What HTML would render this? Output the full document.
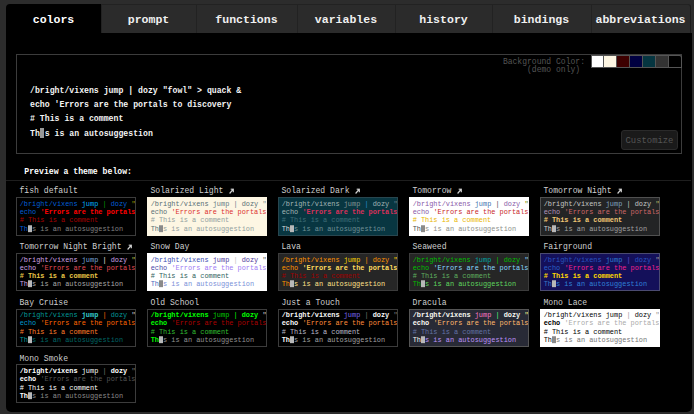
<!DOCTYPE html>
<html><head><meta charset="utf-8">
<style>
html,body{margin:0;padding:0;}
body{width:694px;height:414px;overflow:hidden;background:#2c2c2c;position:relative;font-family:"Liberation Mono",monospace;}
body div{position:absolute;white-space:pre;}
.tab{top:4px;height:28px;background:#2b2b2b;border-top:1px solid #222;border-left:1px solid #222;box-sizing:content-box;}
.tt{color:#f0f0f0;font-weight:bold;}
#panel{left:6px;top:33px;width:685.6px;height:379px;background:#000;border-radius:0 0 5px 5px;}
#bigbox{left:16px;top:54px;width:664px;height:98px;border:1px solid #3c3c3c;}
.sw{top:54px;height:13px;}
.mp{color:#f4f4f4;font-weight:bold;}
.cur{display:inline-block;background:#999;}
.box{overflow:hidden;}
.box div{position:static;}
.ttl{color:#cfcfcf;}
.arr{position:absolute;}
</style></head><body>

<div class="tab" style="left:101px;width:94px;"></div>
<div class="tab" style="left:196px;width:100px;"></div>
<div class="tab" style="left:297px;width:97px;"></div>
<div class="tab" style="left:395px;width:96px;"></div>
<div class="tab" style="left:492px;width:98px;"></div>
<div class="tab" style="left:591px;width:98px;border-right:1px solid #1c1c1c;border-radius:0 3px 0 0;"></div>
<div id="panel"></div>
<div style="left:6px;top:4px;width:95px;height:30px;background:#000;border-radius:4px 0 0 0;"></div>
<div class="tt" style="left:32.71px;top:13.23px;font-size:11.55px;line-height:14px;color:#fff;">colors</div>
<div class="tt" style="left:127.71px;top:13.23px;font-size:11.55px;line-height:14px;">prompt</div>
<div class="tt" style="left:215.31px;top:13.23px;font-size:11.55px;line-height:14px;">functions</div>
<div class="tt" style="left:314.81px;top:13.23px;font-size:11.55px;line-height:14px;">variables</div>
<div class="tt" style="left:419.25px;top:13.23px;font-size:11.55px;line-height:14px;">history</div>
<div class="tt" style="left:513.78px;top:13.23px;font-size:11.55px;line-height:14px;">bindings</div>
<div class="tt" style="left:595.46px;top:13.23px;font-size:11.55px;line-height:14px;">abbreviations</div>
<div id="bigbox"></div>
<div style="left:502.89px;top:56.56px;font-size:8.05px;line-height:9px;transform:scaleY(1.12);transform-origin:0 6.64px;color:#555;">Background Color:</div>
<div style="left:527.04px;top:64.96px;font-size:8.05px;line-height:9px;transform:scaleY(1.12);transform-origin:0 6.64px;color:#555;">(demo only)</div>
<div style="left:590.5px;top:54.5px;width:91px;height:13.5px;background:#555;border-radius:0 2px 0 0;"></div>
<div style="left:591.50px;top:55.5px;width:11.90px;height:11.5px;background:#fff;"></div>
<div style="left:604.40px;top:55.5px;width:11.90px;height:11.5px;background:#fdf6e3;"></div>
<div style="left:617.30px;top:55.5px;width:11.90px;height:11.5px;background:#3d0000;"></div>
<div style="left:630.20px;top:55.5px;width:11.90px;height:11.5px;background:#000040;"></div>
<div style="left:643.10px;top:55.5px;width:11.90px;height:11.5px;background:#053540;"></div>
<div style="left:656.00px;top:55.5px;width:11.90px;height:11.5px;background:#333;"></div>
<div style="left:668.90px;top:55.5px;width:11.90px;height:11.5px;background:#000;border-radius:0 1.5px 0 0;"></div>
<div class="mp" style="left:30.00px;top:80.62px;font-size:8.2px;line-height:20px;">/bright/vixens jump | dozy "fowl" &gt; quack &amp;</div>
<div class="mp" style="left:30.00px;top:94.95px;font-size:8.2px;line-height:20px;">echo 'Errors are the portals to discovery</div>
<div class="mp" style="left:30.00px;top:109.28px;font-size:8.2px;line-height:20px;"># This is a comment</div>
<div class="mp" style="left:30.00px;top:123.61px;font-size:8.2px;line-height:20px;">Th<span class="cur" style="width:4.3px;height:9.8px;vertical-align:-1.9px;margin-right:0.62px;"></span>s is an autosuggestion</div>
<div style="left:621px;top:130px;width:57px;height:20px;box-sizing:border-box;border:1px solid #2a2a2a;background:#1a1a1a;border-radius:3px;"></div>
<div style="left:625.50px;top:135.63px;font-size:8.9px;line-height:10px;color:#555;">Customize</div>
<div style="left:24.30px;top:167.13px;font-size:8.17px;line-height:10px;color:#fff;font-weight:bold;">Preview a theme below:</div>
<div style="left:6px;top:179.5px;width:685px;height:1px;background:#1e1e1e;"></div>
<div class="ttl" style="left:19.50px;top:186.34px;font-size:8.1px;line-height:9px;transform:scaleY(1.2);transform-origin:0 6.66px;">fish default</div>
<div class="box" style="left:16.00px;top:197.10px;width:120px;height:38.5px;background:#000;border:1px solid #3c3c3c;box-sizing:border-box;">
<div style="position:absolute;left:2.7px;top:1.74px;font-size:6.9px;line-height:8.25px;transform:scaleY(1.15);transform-origin:0 5.96px;"><span style="color:#005fd7">/bright/vixens</span> <span style="color:#00afff">jump</span> <span style="color:#009900">|</span> <span style="color:#005fd7">dozy</span> <span style="color:#999900">&quot;fowl&quot;</span></div>
<div style="position:absolute;left:2.7px;top:9.99px;font-size:6.9px;line-height:8.25px;transform:scaleY(1.15);transform-origin:0 5.96px;"><span style="color:#005fd7">echo</span> <span style="color:#ff0000;font-weight:bold">'Errors are the portals to discovery</span></div>
<div style="position:absolute;left:2.7px;top:18.24px;font-size:6.9px;line-height:8.25px;transform:scaleY(1.15);transform-origin:0 5.96px;"><span style="color:#a80000"># This is a comment</span></div>
<div style="position:absolute;left:2.7px;top:26.49px;font-size:6.9px;line-height:8.25px;transform:scaleY(1.15);transform-origin:0 5.96px;"><span style="color:#005fd7">Th</span><span class="cur" style="width:4.14px;height:5.6px;vertical-align:-0.6px;background:#b8b8b8"></span><span style="color:#808080">s is an autosuggestion</span></div>
</div>
<div class="ttl" style="left:150.50px;top:186.34px;font-size:8.1px;line-height:9px;transform:scaleY(1.2);transform-origin:0 6.66px;">Solarized Light<svg width="5" height="5" viewBox="0 0 5 5" style="vertical-align:-0.5px;margin-left:5.6px"><path d="M0.6 4.4 L4.2 0.8 M1.7 0.7 H4.3 V3.3" stroke="#d0d0d0" stroke-width="1.2" fill="none"/></svg></div>
<div class="box" style="left:147.00px;top:197.10px;width:120px;height:38.5px;background:#fdf6e3;border:1px solid #fdf6e3;box-sizing:border-box;">
<div style="position:absolute;left:2.7px;top:1.74px;font-size:6.9px;line-height:8.25px;transform:scaleY(1.15);transform-origin:0 5.96px;"><span style="color:#586e75">/bright/vixens</span> <span style="color:#657b83">jump</span> <span style="color:#657b83">|</span> <span style="color:#586e75">dozy</span> <span style="color:#839496">&quot;fowl&quot;</span></div>
<div style="position:absolute;left:2.7px;top:9.99px;font-size:6.9px;line-height:8.25px;transform:scaleY(1.15);transform-origin:0 5.96px;"><span style="color:#586e75">echo</span> <span style="color:#dc322f">'Errors are the portals to discovery</span></div>
<div style="position:absolute;left:2.7px;top:18.24px;font-size:6.9px;line-height:8.25px;transform:scaleY(1.15);transform-origin:0 5.96px;"><span style="color:#93a1a1"># This is a comment</span></div>
<div style="position:absolute;left:2.7px;top:26.49px;font-size:6.9px;line-height:8.25px;transform:scaleY(1.15);transform-origin:0 5.96px;"><span style="color:#586e75">Th</span><span class="cur" style="width:4.14px;height:5.6px;vertical-align:-0.6px;background:#8a8a8a"></span><span style="color:#93a1a1">s is an autosuggestion</span></div>
</div>
<div class="ttl" style="left:281.50px;top:186.34px;font-size:8.1px;line-height:9px;transform:scaleY(1.2);transform-origin:0 6.66px;">Solarized Dark<svg width="5" height="5" viewBox="0 0 5 5" style="vertical-align:-0.5px;margin-left:5.6px"><path d="M0.6 4.4 L4.2 0.8 M1.7 0.7 H4.3 V3.3" stroke="#d0d0d0" stroke-width="1.2" fill="none"/></svg></div>
<div class="box" style="left:278.00px;top:197.10px;width:120px;height:38.5px;background:#083641;border:1px solid #28464f;box-sizing:border-box;">
<div style="position:absolute;left:2.7px;top:1.74px;font-size:6.9px;line-height:8.25px;transform:scaleY(1.15);transform-origin:0 5.96px;"><span style="color:#a3b5b5">/bright/vixens</span> <span style="color:#839496">jump</span> <span style="color:#268bd2">|</span> <span style="color:#a3b5b5">dozy</span> <span style="color:#657b83">&quot;fowl&quot;</span></div>
<div style="position:absolute;left:2.7px;top:9.99px;font-size:6.9px;line-height:8.25px;transform:scaleY(1.15);transform-origin:0 5.96px;"><span style="color:#a3b5b5">echo</span> <span style="color:#d8305a;font-weight:bold">'Errors are the portals to discovery</span></div>
<div style="position:absolute;left:2.7px;top:18.24px;font-size:6.9px;line-height:8.25px;transform:scaleY(1.15);transform-origin:0 5.96px;"><span style="color:#3d6c76"># This is a comment</span></div>
<div style="position:absolute;left:2.7px;top:26.49px;font-size:6.9px;line-height:8.25px;transform:scaleY(1.15);transform-origin:0 5.96px;"><span style="color:#dddddd">Th</span><span class="cur" style="width:4.14px;height:5.6px;vertical-align:-0.6px;background:#b8b8b8"></span><span style="color:#6f9096">s is an autosuggestion</span></div>
</div>
<div class="ttl" style="left:412.50px;top:186.34px;font-size:8.1px;line-height:9px;transform:scaleY(1.2);transform-origin:0 6.66px;">Tomorrow<svg width="5" height="5" viewBox="0 0 5 5" style="vertical-align:-0.5px;margin-left:5.6px"><path d="M0.6 4.4 L4.2 0.8 M1.7 0.7 H4.3 V3.3" stroke="#d0d0d0" stroke-width="1.2" fill="none"/></svg></div>
<div class="box" style="left:409.00px;top:197.10px;width:120px;height:38.5px;background:#ffffff;border:1px solid #ffffff;box-sizing:border-box;">
<div style="position:absolute;left:2.7px;top:1.74px;font-size:6.9px;line-height:8.25px;transform:scaleY(1.15);transform-origin:0 5.96px;"><span style="color:#8959a8">/bright/vixens</span> <span style="color:#4271ae">jump</span> <span style="color:#4d4d4c">|</span> <span style="color:#8959a8">dozy</span> <span style="color:#718c00">&quot;fowl&quot;</span></div>
<div style="position:absolute;left:2.7px;top:9.99px;font-size:6.9px;line-height:8.25px;transform:scaleY(1.15);transform-origin:0 5.96px;"><span style="color:#8959a8">echo</span> <span style="color:#c82829">'Errors are the portals to discovery</span></div>
<div style="position:absolute;left:2.7px;top:18.24px;font-size:6.9px;line-height:8.25px;transform:scaleY(1.15);transform-origin:0 5.96px;"><span style="color:#eab700"># This is a comment</span></div>
<div style="position:absolute;left:2.7px;top:26.49px;font-size:6.9px;line-height:8.25px;transform:scaleY(1.15);transform-origin:0 5.96px;"><span style="color:#4d4d4c">Th</span><span class="cur" style="width:4.14px;height:5.6px;vertical-align:-0.6px;background:#8a8a8a"></span><span style="color:#8e908c">s is an autosuggestion</span></div>
</div>
<div class="ttl" style="left:543.50px;top:186.34px;font-size:8.1px;line-height:9px;transform:scaleY(1.2);transform-origin:0 6.66px;">Tomorrow Night<svg width="5" height="5" viewBox="0 0 5 5" style="vertical-align:-0.5px;margin-left:5.6px"><path d="M0.6 4.4 L4.2 0.8 M1.7 0.7 H4.3 V3.3" stroke="#d0d0d0" stroke-width="1.2" fill="none"/></svg></div>
<div class="box" style="left:540.00px;top:197.10px;width:120px;height:38.5px;background:#232425;border:1px solid #505050;box-sizing:border-box;">
<div style="position:absolute;left:2.7px;top:1.74px;font-size:6.9px;line-height:8.25px;transform:scaleY(1.15);transform-origin:0 5.96px;"><span style="color:#c5c8c6">/bright/vixens</span> <span style="color:#81a2be">jump</span> <span style="color:#c5c8c6">|</span> <span style="color:#c5c8c6">dozy</span> <span style="color:#b5bd68">&quot;fowl&quot;</span></div>
<div style="position:absolute;left:2.7px;top:9.99px;font-size:6.9px;line-height:8.25px;transform:scaleY(1.15);transform-origin:0 5.96px;"><span style="color:#b294bb">echo</span> <span style="color:#cc6666">'Errors are the portals to discovery</span></div>
<div style="position:absolute;left:2.7px;top:18.24px;font-size:6.9px;line-height:8.25px;transform:scaleY(1.15);transform-origin:0 5.96px;"><span style="color:#f0c674;font-weight:bold"># This is a comment</span></div>
<div style="position:absolute;left:2.7px;top:26.49px;font-size:6.9px;line-height:8.25px;transform:scaleY(1.15);transform-origin:0 5.96px;"><span style="color:#d0d0d0">Th</span><span class="cur" style="width:4.14px;height:5.6px;vertical-align:-0.6px;background:#b8b8b8"></span><span style="color:#a0a0a0">s is an autosuggestion</span></div>
</div>
<div class="ttl" style="left:19.50px;top:242.04px;font-size:8.1px;line-height:9px;transform:scaleY(1.2);transform-origin:0 6.66px;">Tomorrow Night Bright<svg width="5" height="5" viewBox="0 0 5 5" style="vertical-align:-0.5px;margin-left:5.6px"><path d="M0.6 4.4 L4.2 0.8 M1.7 0.7 H4.3 V3.3" stroke="#d0d0d0" stroke-width="1.2" fill="none"/></svg></div>
<div class="box" style="left:16.00px;top:252.80px;width:120px;height:38.5px;background:#000;border:1px solid #3c3c3c;box-sizing:border-box;">
<div style="position:absolute;left:2.7px;top:1.74px;font-size:6.9px;line-height:8.25px;transform:scaleY(1.15);transform-origin:0 5.96px;"><span style="color:#d0a4e6">/bright/vixens</span> <span style="color:#7aa6da">jump</span> <span style="color:#eaeaea">|</span> <span style="color:#d0a4e6">dozy</span> <span style="color:#b9ca4a">&quot;fowl&quot;</span></div>
<div style="position:absolute;left:2.7px;top:9.99px;font-size:6.9px;line-height:8.25px;transform:scaleY(1.15);transform-origin:0 5.96px;"><span style="color:#d0a4e6">echo</span> <span style="color:#e04a55">'Errors are the portals to discovery</span></div>
<div style="position:absolute;left:2.7px;top:18.24px;font-size:6.9px;line-height:8.25px;transform:scaleY(1.15);transform-origin:0 5.96px;"><span style="color:#e7c547;font-weight:bold"># This is a comment</span></div>
<div style="position:absolute;left:2.7px;top:26.49px;font-size:6.9px;line-height:8.25px;transform:scaleY(1.15);transform-origin:0 5.96px;"><span style="color:#d0a4e6">Th</span><span class="cur" style="width:4.14px;height:5.6px;vertical-align:-0.6px;background:#b8b8b8"></span><span style="color:#a8a8a8">s is an autosuggestion</span></div>
</div>
<div class="ttl" style="left:150.50px;top:242.04px;font-size:8.1px;line-height:9px;transform:scaleY(1.2);transform-origin:0 6.66px;">Snow Day</div>
<div class="box" style="left:147.00px;top:252.80px;width:120px;height:38.5px;background:#ffffff;border:1px solid #ffffff;box-sizing:border-box;">
<div style="position:absolute;left:2.7px;top:1.74px;font-size:6.9px;line-height:8.25px;transform:scaleY(1.15);transform-origin:0 5.96px;"><span style="color:#3a4cb0">/bright/vixens</span> <span style="color:#4c3499">jump</span> <span style="color:#c0c0c0">|</span> <span style="color:#4c3499">dozy</span> <span style="color:#5a5a5a">&quot;fowl&quot;</span></div>
<div style="position:absolute;left:2.7px;top:9.99px;font-size:6.9px;line-height:8.25px;transform:scaleY(1.15);transform-origin:0 5.96px;"><span style="color:#4a4aa8">echo</span> <span style="color:#9f7df5">'Errors are the portals to discovery</span></div>
<div style="position:absolute;left:2.7px;top:18.24px;font-size:6.9px;line-height:8.25px;transform:scaleY(1.15);transform-origin:0 5.96px;"><span style="color:#305f5d"># This is a comment</span></div>
<div style="position:absolute;left:2.7px;top:26.49px;font-size:6.9px;line-height:8.25px;transform:scaleY(1.15);transform-origin:0 5.96px;"><span style="color:#4a68c0">Th</span><span class="cur" style="width:4.14px;height:5.6px;vertical-align:-0.6px;background:#8a8a8a"></span><span style="color:#7a90d8">s is an autosuggestion</span></div>
</div>
<div class="ttl" style="left:281.50px;top:242.04px;font-size:8.1px;line-height:9px;transform:scaleY(1.2);transform-origin:0 6.66px;">Lava</div>
<div class="box" style="left:278.00px;top:252.80px;width:120px;height:38.5px;background:#262626;border:1px solid #3c3c3c;box-sizing:border-box;">
<div style="position:absolute;left:2.7px;top:1.74px;font-size:6.9px;line-height:8.25px;transform:scaleY(1.15);transform-origin:0 5.96px;"><span style="color:#ff9400">/bright/vixens</span> <span style="color:#ffd700">jump</span> <span style="color:#ff9400">|</span> <span style="color:#ff9400">dozy</span> <span style="color:#ffd700">&quot;fowl&quot;</span></div>
<div style="position:absolute;left:2.7px;top:9.99px;font-size:6.9px;line-height:8.25px;transform:scaleY(1.15);transform-origin:0 5.96px;"><span style="color:#ff9400">echo</span> <span style="color:#ffdc5f;font-weight:bold">'Errors are the portals to discovery</span></div>
<div style="position:absolute;left:2.7px;top:18.24px;font-size:6.9px;line-height:8.25px;transform:scaleY(1.15);transform-origin:0 5.96px;"><span style="color:#9f0000"># This is a comment</span></div>
<div style="position:absolute;left:2.7px;top:26.49px;font-size:6.9px;line-height:8.25px;transform:scaleY(1.15);transform-origin:0 5.96px;"><span style="color:#ff9400">Th</span><span class="cur" style="width:4.14px;height:5.6px;vertical-align:-0.6px;background:#b8b8b8"></span><span style="color:#ffe08a">s is an autosuggestion</span></div>
</div>
<div class="ttl" style="left:412.50px;top:242.04px;font-size:8.1px;line-height:9px;transform:scaleY(1.2);transform-origin:0 6.66px;">Seaweed</div>
<div class="box" style="left:409.00px;top:252.80px;width:120px;height:38.5px;background:#262626;border:1px solid #3c3c3c;box-sizing:border-box;">
<div style="position:absolute;left:2.7px;top:1.74px;font-size:6.9px;line-height:8.25px;transform:scaleY(1.15);transform-origin:0 5.96px;"><span style="color:#00bf00">/bright/vixens</span> <span style="color:#00a5a5">jump</span> <span style="color:#00bf00">|</span> <span style="color:#00bf00">dozy</span> <span style="color:#87d7ff">&quot;fowl&quot;</span></div>
<div style="position:absolute;left:2.7px;top:9.99px;font-size:6.9px;line-height:8.25px;transform:scaleY(1.15);transform-origin:0 5.96px;"><span style="color:#00bf00">echo</span> <span style="color:#87d7ff">'Errors are the portals to discovery</span></div>
<div style="position:absolute;left:2.7px;top:18.24px;font-size:6.9px;line-height:8.25px;transform:scaleY(1.15);transform-origin:0 5.96px;"><span style="color:#5faf5f"># This is a comment</span></div>
<div style="position:absolute;left:2.7px;top:26.49px;font-size:6.9px;line-height:8.25px;transform:scaleY(1.15);transform-origin:0 5.96px;"><span style="color:#00bf00">Th</span><span class="cur" style="width:4.14px;height:5.6px;vertical-align:-0.6px;background:#b8b8b8"></span><span style="color:#5fd75f">s is an autosuggestion</span></div>
</div>
<div class="ttl" style="left:543.50px;top:242.04px;font-size:8.1px;line-height:9px;transform:scaleY(1.2);transform-origin:0 6.66px;">Fairground</div>
<div class="box" style="left:540.00px;top:252.80px;width:120px;height:38.5px;background:#14105a;border:1px solid #4a4a70;box-sizing:border-box;">
<div style="position:absolute;left:2.7px;top:1.74px;font-size:6.9px;line-height:8.25px;transform:scaleY(1.15);transform-origin:0 5.96px;"><span style="color:#2a55c0">/bright/vixens</span> <span style="color:#2f7fd0">jump</span> <span style="color:#6a4fd0">|</span> <span style="color:#2a55c0">dozy</span> <span style="color:#a0a0a0">&quot;fowl&quot;</span></div>
<div style="position:absolute;left:2.7px;top:9.99px;font-size:6.9px;line-height:8.25px;transform:scaleY(1.15);transform-origin:0 5.96px;"><span style="color:#2a60c8">echo</span> <span style="color:#f0208f">'Errors are the portals to discovery</span></div>
<div style="position:absolute;left:2.7px;top:18.24px;font-size:6.9px;line-height:8.25px;transform:scaleY(1.15);transform-origin:0 5.96px;"><span style="color:#ffd700;font-weight:bold"># This is a comment</span></div>
<div style="position:absolute;left:2.7px;top:26.49px;font-size:6.9px;line-height:8.25px;transform:scaleY(1.15);transform-origin:0 5.96px;"><span style="color:#3a7ac8">Th</span><span class="cur" style="width:4.14px;height:5.6px;vertical-align:-0.6px;background:#b8b8b8"></span><span style="color:#2f80d8">s is an autosuggestion</span></div>
</div>
<div class="ttl" style="left:19.50px;top:297.74px;font-size:8.1px;line-height:9px;transform:scaleY(1.2);transform-origin:0 6.66px;">Bay Cruise</div>
<div class="box" style="left:16.00px;top:308.50px;width:120px;height:38.5px;background:#000;border:1px solid #3c3c3c;box-sizing:border-box;">
<div style="position:absolute;left:2.7px;top:1.74px;font-size:6.9px;line-height:8.25px;transform:scaleY(1.15);transform-origin:0 5.96px;"><span style="color:#009999">/bright/vixens</span> <span style="color:#33cccc;font-weight:bold">jump</span> <span style="color:#ff6600">|</span> <span style="color:#009999">dozy</span> <span style="color:#ccc">&quot;fowl&quot;</span></div>
<div style="position:absolute;left:2.7px;top:9.99px;font-size:6.9px;line-height:8.25px;transform:scaleY(1.15);transform-origin:0 5.96px;"><span style="color:#0099cc">echo</span> <span style="color:#ff6600">'Errors are the portals to discovery</span></div>
<div style="position:absolute;left:2.7px;top:18.24px;font-size:6.9px;line-height:8.25px;transform:scaleY(1.15);transform-origin:0 5.96px;"><span style="color:#ff7f2a"># This is a comment</span></div>
<div style="position:absolute;left:2.7px;top:26.49px;font-size:6.9px;line-height:8.25px;transform:scaleY(1.15);transform-origin:0 5.96px;"><span style="color:#009999">Th</span><span class="cur" style="width:4.14px;height:5.6px;vertical-align:-0.6px;background:#b8b8b8"></span><span style="color:#006666">s is an autosuggestion</span></div>
</div>
<div class="ttl" style="left:150.50px;top:297.74px;font-size:8.1px;line-height:9px;transform:scaleY(1.2);transform-origin:0 6.66px;">Old School</div>
<div class="box" style="left:147.00px;top:308.50px;width:120px;height:38.5px;background:#000;border:1px solid #3c3c3c;box-sizing:border-box;">
<div style="position:absolute;left:2.7px;top:1.74px;font-size:6.9px;line-height:8.25px;transform:scaleY(1.15);transform-origin:0 5.96px;"><span style="color:#00ff00;font-weight:bold">/bright/vixens</span> <span style="color:#00cc00">jump</span> <span style="color:#00ff00">|</span> <span style="color:#00ff00;font-weight:bold">dozy</span> <span style="color:#ccc">&quot;fowl&quot;</span></div>
<div style="position:absolute;left:2.7px;top:9.99px;font-size:6.9px;line-height:8.25px;transform:scaleY(1.15);transform-origin:0 5.96px;"><span style="color:#00ff00;font-weight:bold">echo</span> <span style="color:#aa0000">'Errors are the portals to discovery</span></div>
<div style="position:absolute;left:2.7px;top:18.24px;font-size:6.9px;line-height:8.25px;transform:scaleY(1.15);transform-origin:0 5.96px;"><span style="color:#30be30"># This is a comment</span></div>
<div style="position:absolute;left:2.7px;top:26.49px;font-size:6.9px;line-height:8.25px;transform:scaleY(1.15);transform-origin:0 5.96px;"><span style="color:#00ff00;font-weight:bold">Th</span><span class="cur" style="width:4.14px;height:5.6px;vertical-align:-0.6px;background:#b8b8b8"></span><span style="color:#909090">s is an autosuggestion</span></div>
</div>
<div class="ttl" style="left:281.50px;top:297.74px;font-size:8.1px;line-height:9px;transform:scaleY(1.2);transform-origin:0 6.66px;">Just a Touch</div>
<div class="box" style="left:278.00px;top:308.50px;width:120px;height:38.5px;background:#000;border:1px solid #3c3c3c;box-sizing:border-box;">
<div style="position:absolute;left:2.7px;top:1.74px;font-size:6.9px;line-height:8.25px;transform:scaleY(1.15);transform-origin:0 5.96px;"><span style="color:#f8f8f8;font-weight:bold">/bright/vixens</span> <span style="color:#7b68ee">jump</span> <span style="color:#777">|</span> <span style="color:#f8f8f8;font-weight:bold">dozy</span> <span style="color:#777">&quot;fowl&quot;</span></div>
<div style="position:absolute;left:2.7px;top:9.99px;font-size:6.9px;line-height:8.25px;transform:scaleY(1.15);transform-origin:0 5.96px;"><span style="color:#f8f8f8;font-weight:bold">echo</span> <span style="color:#ff8c3a">'Errors are the portals to discovery</span></div>
<div style="position:absolute;left:2.7px;top:18.24px;font-size:6.9px;line-height:8.25px;transform:scaleY(1.15);transform-origin:0 5.96px;"><span style="color:#b8b8c8"># This is a comment</span></div>
<div style="position:absolute;left:2.7px;top:26.49px;font-size:6.9px;line-height:8.25px;transform:scaleY(1.15);transform-origin:0 5.96px;"><span style="color:#f8f8f8;font-weight:bold">Th</span><span class="cur" style="width:4.14px;height:5.6px;vertical-align:-0.6px;background:#b8b8b8"></span><span style="color:#a0a0a0">s is an autosuggestion</span></div>
</div>
<div class="ttl" style="left:412.50px;top:297.74px;font-size:8.1px;line-height:9px;transform:scaleY(1.2);transform-origin:0 6.66px;">Dracula</div>
<div class="box" style="left:409.00px;top:308.50px;width:120px;height:38.5px;background:#282a36;border:1px solid #555;box-sizing:border-box;">
<div style="position:absolute;left:2.7px;top:1.74px;font-size:6.9px;line-height:8.25px;transform:scaleY(1.15);transform-origin:0 5.96px;"><span style="color:#f8f8f2;font-weight:bold">/bright/vixens</span> <span style="color:#ff79c6">jump</span> <span style="color:#50fa7b">|</span> <span style="color:#f8f8f2;font-weight:bold">dozy</span> <span style="color:#f1fa8c">&quot;fowl&quot;</span></div>
<div style="position:absolute;left:2.7px;top:9.99px;font-size:6.9px;line-height:8.25px;transform:scaleY(1.15);transform-origin:0 5.96px;"><span style="color:#f8f8f2;font-weight:bold">echo</span> <span style="color:#ffb86c">'Errors are the portals to discovery</span></div>
<div style="position:absolute;left:2.7px;top:18.24px;font-size:6.9px;line-height:8.25px;transform:scaleY(1.15);transform-origin:0 5.96px;"><span style="color:#6272a4"># This is a comment</span></div>
<div style="position:absolute;left:2.7px;top:26.49px;font-size:6.9px;line-height:8.25px;transform:scaleY(1.15);transform-origin:0 5.96px;"><span style="color:#f8f8f2">Th</span><span class="cur" style="width:4.14px;height:5.6px;vertical-align:-0.6px;background:#b8b8b8"></span><span style="color:#bd93f9">s is an autosuggestion</span></div>
</div>
<div class="ttl" style="left:543.50px;top:297.74px;font-size:8.1px;line-height:9px;transform:scaleY(1.2);transform-origin:0 6.66px;">Mono Lace</div>
<div class="box" style="left:540.00px;top:308.50px;width:120px;height:38.5px;background:#ffffff;border:1px solid #ffffff;box-sizing:border-box;">
<div style="position:absolute;left:2.7px;top:1.74px;font-size:6.9px;line-height:8.25px;transform:scaleY(1.15);transform-origin:0 5.96px;"><span style="color:#000">/bright/vixens</span> <span style="color:#000">jump</span> <span style="color:#999">|</span> <span style="color:#000">dozy</span> <span style="color:#999">&quot;fowl&quot;</span></div>
<div style="position:absolute;left:2.7px;top:9.99px;font-size:6.9px;line-height:8.25px;transform:scaleY(1.15);transform-origin:0 5.96px;"><span style="color:#000;font-weight:bold">echo</span> <span style="color:#aaa">'Errors are the portals to discovery</span></div>
<div style="position:absolute;left:2.7px;top:18.24px;font-size:6.9px;line-height:8.25px;transform:scaleY(1.15);transform-origin:0 5.96px;"><span style="color:#000"># This is a comment</span></div>
<div style="position:absolute;left:2.7px;top:26.49px;font-size:6.9px;line-height:8.25px;transform:scaleY(1.15);transform-origin:0 5.96px;"><span style="color:#000">Th</span><span class="cur" style="width:4.14px;height:5.6px;vertical-align:-0.6px;background:#8a8a8a"></span><span style="color:#777">s is an autosuggestion</span></div>
</div>
<div class="ttl" style="left:19.50px;top:353.54px;font-size:8.1px;line-height:9px;transform:scaleY(1.2);transform-origin:0 6.66px;">Mono Smoke</div>
<div class="box" style="left:16.00px;top:364.30px;width:120px;height:38.5px;background:#000;border:1px solid #3c3c3c;box-sizing:border-box;">
<div style="position:absolute;left:2.7px;top:1.74px;font-size:6.9px;line-height:8.25px;transform:scaleY(1.15);transform-origin:0 5.96px;"><span style="color:#fff;font-weight:bold">/bright/vixens</span> <span style="color:#fff">jump</span> <span style="color:#777">|</span> <span style="color:#fff;font-weight:bold">dozy</span> <span style="color:#777">&quot;fowl&quot;</span></div>
<div style="position:absolute;left:2.7px;top:9.99px;font-size:6.9px;line-height:8.25px;transform:scaleY(1.15);transform-origin:0 5.96px;"><span style="color:#fff;font-weight:bold">echo</span> <span style="color:#555">'Errors are the portals to discovery</span></div>
<div style="position:absolute;left:2.7px;top:18.24px;font-size:6.9px;line-height:8.25px;transform:scaleY(1.15);transform-origin:0 5.96px;"><span style="color:#fff"># This is a comment</span></div>
<div style="position:absolute;left:2.7px;top:26.49px;font-size:6.9px;line-height:8.25px;transform:scaleY(1.15);transform-origin:0 5.96px;"><span style="color:#fff;font-weight:bold">Th</span><span class="cur" style="width:4.14px;height:5.6px;vertical-align:-0.6px;background:#b8b8b8"></span><span style="color:#8a8a8a">s is an autosuggestion</span></div>
</div>
</body></html>
